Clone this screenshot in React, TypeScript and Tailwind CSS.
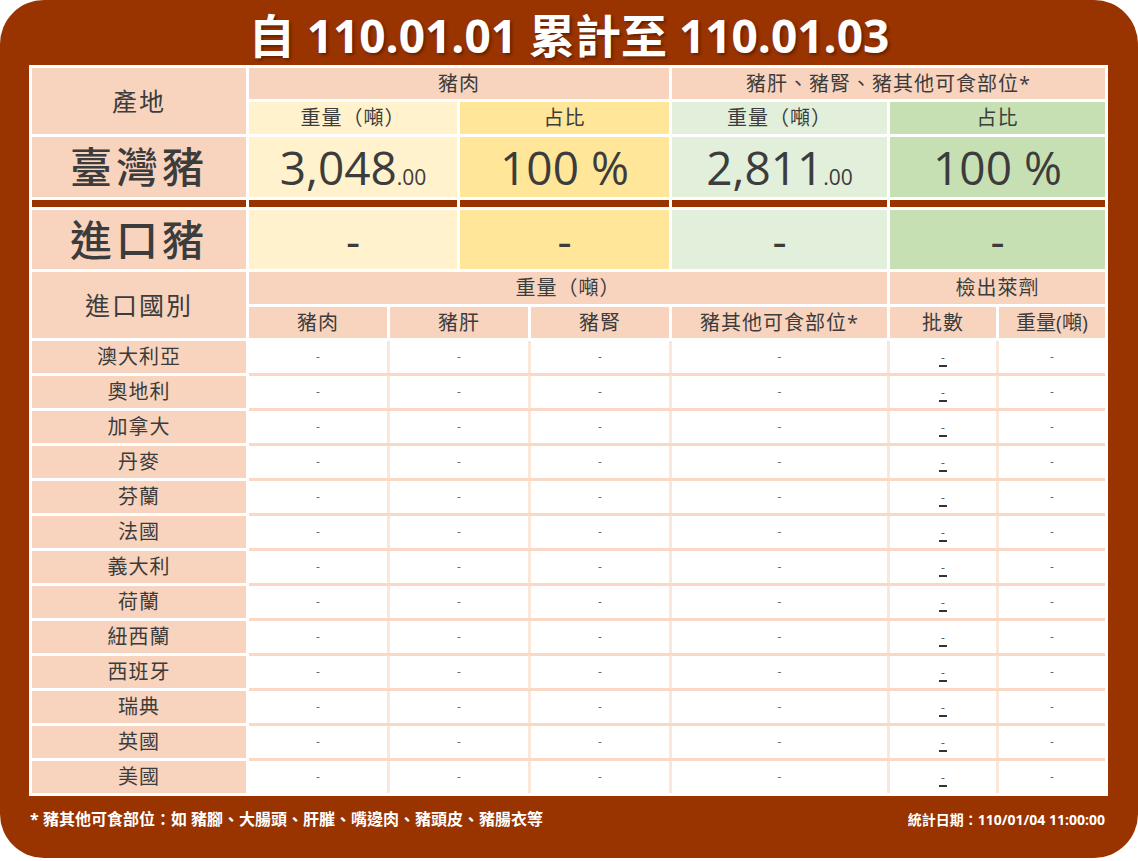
import type { ReactNode } from "react";

const countries = [
  "澳大利亞",
  "奧地利",
  "加拿大",
  "丹麥",
  "芬蘭",
  "法國",
  "義大利",
  "荷蘭",
  "紐西蘭",
  "西班牙",
  "瑞典",
  "英國",
  "美國",
];

// 表頭、產地欄共用的淺橘色
const PEACH = "bg-[#f8d4be]";

function Cell({ className = "", children }: { className?: string; children?: ReactNode }) {
  return (
    <div className={`flex items-center justify-center leading-none ${className}`}>{children}</div>
  );
}

function Dash() {
  return <span className="text-[12px] text-[#666]">-</span>;
}

export default function App() {
  return (
    <div className="h-[861px] w-[1138px] bg-white font-['Open_Sans','Noto_Sans_CJK_TC',sans-serif]">
      <div className="flex h-[858px] w-[1138px] flex-col rounded-[44px] bg-[#993300] px-[29px]">
        <div className="flex h-[65px] justify-center pt-[12px]">
          <h1 className="text-[46px] font-bold leading-[46px] text-white [text-shadow:2px_2px_3px_rgba(0,0,0,0.35)]">
            自 110.01.01 累計至 110.01.03
          </h1>
        </div>

        <div className="w-[1079px] bg-white p-[3px] text-[#3c3c3c]">
          {/* 上半部：臺灣豬 / 進口豬 總量 */}
          <div className="grid grid-cols-[214px_208px_209px_215px_215px] grid-rows-[31px_32px_60px_7px_59px] gap-[3px] text-[20px] tracking-[1px]">
            <Cell className={`row-span-2 ${PEACH} text-[25px] tracking-[2px]`}>產地</Cell>
            <Cell className={`col-span-2 ${PEACH}`}>豬肉</Cell>
            <Cell className={`col-span-2 ${PEACH}`}>豬肝、豬腎、豬其他可食部位*</Cell>
            <Cell className="bg-[#fff2cc]">重量（噸）</Cell>
            <Cell className="bg-[#ffe699]">占比</Cell>
            <Cell className="bg-[#e2efda]">重量（噸）</Cell>
            <Cell className="bg-[#c6e0b4]">占比</Cell>

            <Cell className={`${PEACH} text-[42px] font-medium tracking-[4px]`}>臺灣豬</Cell>
            <Cell className="bg-[#fff2cc] text-[46px] tracking-normal">
              <span>
                3,048<span className="text-[21px]">.00</span>
              </span>
            </Cell>
            <Cell className="bg-[#ffe699] text-[46px] tracking-normal">100 %</Cell>
            <Cell className="bg-[#e2efda] text-[46px] tracking-normal">
              <span>
                2,811<span className="text-[21px]">.00</span>
              </span>
            </Cell>
            <Cell className="bg-[#c6e0b4] text-[46px] tracking-normal">100 %</Cell>

            <div className="bg-[#993300]" />
            <div className="bg-[#993300]" />
            <div className="bg-[#993300]" />
            <div className="bg-[#993300]" />
            <div className="bg-[#993300]" />

            <Cell className={`${PEACH} text-[42px] font-medium tracking-[4px]`}>進口豬</Cell>
            <Cell className="bg-[#fff2cc] text-[44px] tracking-normal">-</Cell>
            <Cell className="bg-[#ffe699] text-[44px] tracking-normal">-</Cell>
            <Cell className="bg-[#e2efda] text-[44px] tracking-normal">-</Cell>
            <Cell className="bg-[#c6e0b4] text-[44px] tracking-normal">-</Cell>
          </div>

          {/* 下半部：進口國別明細 */}
          <div className="mt-[3px] grid grid-cols-[214px_138px_138px_138px_215px_106px_106px] grid-rows-[32px_31px] gap-[3px] text-[20px] tracking-[1px]">
            <Cell className={`row-span-2 ${PEACH} text-[25px] tracking-[2px]`}>進口國別</Cell>
            <Cell className={`col-span-4 ${PEACH}`}>重量（噸）</Cell>
            <Cell className={`col-span-2 ${PEACH}`}>檢出萊劑</Cell>
            <Cell className={PEACH}>豬肉</Cell>
            <Cell className={PEACH}>豬肝</Cell>
            <Cell className={PEACH}>豬腎</Cell>
            <Cell className={PEACH}>豬其他可食部位*</Cell>
            <Cell className={PEACH}>批數</Cell>
            <Cell className={`${PEACH} tracking-normal`}>重量(噸)</Cell>
          </div>

          <div className="mt-[3px] flex gap-[3px]">
            <div className="flex w-[214px] flex-col gap-[3px]">
              {countries.map((c) => (
                <Cell key={c} className={`h-[32px] ${PEACH} text-[20px] tracking-[1px]`}>
                  {c}
                </Cell>
              ))}
            </div>
            <div className="flex flex-1 flex-col gap-[3px] bg-[#f9d9c6]">
              {countries.map((c) => (
                <div
                  key={c}
                  className="grid h-[32px] grid-cols-[138px_138px_138px_215px_106px_106px] gap-x-[3px] bg-[#fbe6da]"
                >
                  <Cell className="bg-white">
                    <Dash />
                  </Cell>
                  <Cell className="bg-white">
                    <Dash />
                  </Cell>
                  <Cell className="bg-white">
                    <Dash />
                  </Cell>
                  <Cell className="bg-white">
                    <Dash />
                  </Cell>
                  <Cell className="bg-white pt-[3px]">
                    <span className="inline-block border-b-2 border-[#333] px-[2px] text-[12px] leading-[14px] text-[#555]">
                      -
                    </span>
                  </Cell>
                  <Cell className="bg-white">
                    <Dash />
                  </Cell>
                </div>
              ))}
            </div>
          </div>
        </div>

        <div className="mt-[11px] flex items-center justify-between font-bold text-white">
          <span className="pl-[1px] text-[16px]">* 豬其他可食部位：如 豬腳、大腸頭、肝膗、嘴邊肉、豬頭皮、豬腸衣等</span>
          <span className="pr-[4px] text-[14px]">統計日期：110/01/04 11:00:00</span>
        </div>
      </div>
    </div>
  );
}
